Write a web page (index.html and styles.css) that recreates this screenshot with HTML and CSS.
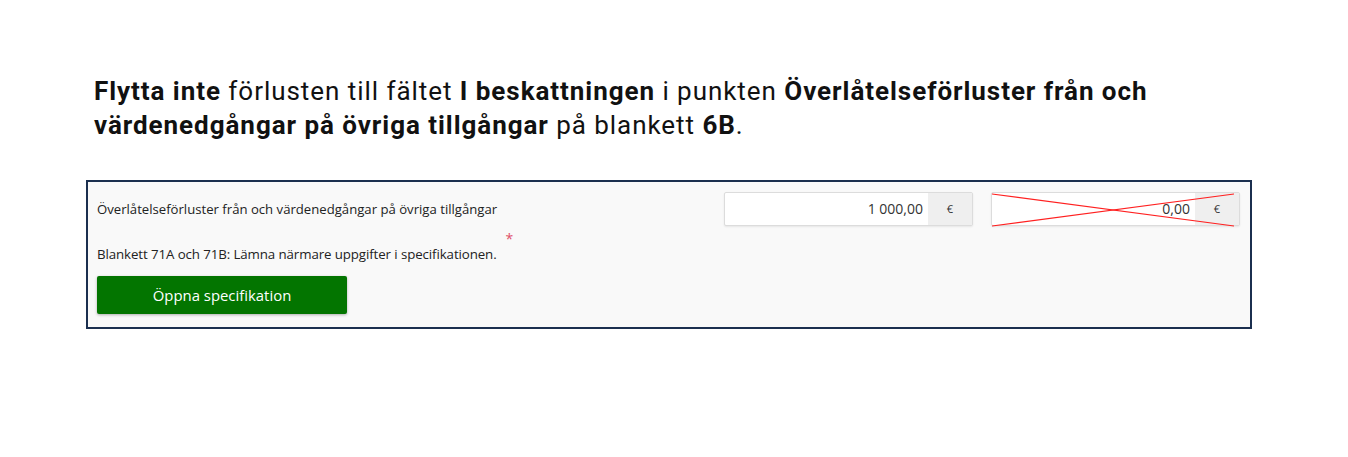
FILE: index.html
```html
<!DOCTYPE html>
<html lang="sv">
<head>
<meta charset="utf-8">
<link rel="stylesheet" href="styles.css">
</head>
<body>
<div class="page">
  <p class="intro"><b>Flytta inte</b> förlusten till fältet <b>I beskattningen</b> i punkten <b>Överlåtelseförluster från och värdenedgångar på övriga tillgångar</b> på blankett <b>6B</b>.</p>
  <div class="panel">
    <div class="row">
      <div class="label">Överlåtelseförluster från och värdenedgångar på övriga tillgångar</div>
      <div class="field">
        <div class="value">1 000,00</div>
        <div class="addon">€</div>
      </div>
      <div class="field crossed">
        <div class="value">0,00</div>
        <div class="addon">€</div>
        <svg class="cross" viewBox="0 0 242 34" preserveAspectRatio="none"><line x1="0" y1="1" x2="242" y2="33" stroke="#ff2020" stroke-width="1.2"/><line x1="0" y1="33" x2="242" y2="1" stroke="#ff2020" stroke-width="1.2"/></svg>
      </div>
    </div>
    <div class="note">Blankett 71A och 71B: Lämna närmare uppgifter i specifikationen.<span class="req">*</span></div>
    <button class="btn">Öppna specifikation</button>
  </div>
</div>
</body>
</html>
```
FILE: styles.css
```css
html, body { margin: 0; padding: 0; background: #fff; }
.page { padding: 74px 0 0 86px; width: 1170px; }
.intro {
  margin: 0 0 0 8px;
  width: 1150px;
  font-family: Roboto, "Liberation Sans", sans-serif;
  font-size: 26px;
  letter-spacing: 0.95px;
  line-height: 34px;
  color: #111;
}
.intro b { font-weight: 700; }
.panel {
  margin-top: 38px;
  width: 1162px;
  height: 145px;
  border: 2px solid #1b2f4f;
  background: #f9f9f9;
  box-sizing: content-box;
  padding: 0;
  font-family: "Open Sans", "Liberation Sans", sans-serif;
  color: #222;
}
.row {
  display: flex;
  align-items: center;
  padding: 10px 10px 0 9px;
  gap: 18px;
}
.label { flex: 1; font-size: 13.15px; line-height: 16px; }
.field {
  position: relative;
  display: flex;
  width: 249px;
  height: 34px;
  box-sizing: border-box;
  border: 1px solid #dcdcdc;
  border-radius: 2px;
  background: #fff;
  box-shadow: 0 1px 2px rgba(0,0,0,0.08);
}
.value {
  flex: 1;
  text-align: right;
  padding-right: 5px;
  font-size: 14px;
  line-height: 32px;
  color: #333;
}
.addon {
  width: 44px;
  background: #efefef;
  text-align: center;
  font-size: 11px;
  line-height: 32px;
  color: #333;
}
.cross { position: absolute; left: 0; top: 0; width: 242px; height: 34px; }
.note {
  margin: 20px 0 0 9px;
  font-size: 13.3px;
  line-height: 16px;
  letter-spacing: -0.1px;
}
.req {
  position: relative;
  top: -15px;
  margin-left: 9px;
  color: #e0506a;
  font-size: 14px;
}
.btn {
  display: block;
  margin: 14px 0 0 9px;
  width: 250px;
  height: 38px;
  border: none;
  border-radius: 2px;
  background: #037500;
  color: #fff;
  font-family: "Open Sans", "Liberation Sans", sans-serif;
  font-size: 14.9px;
  box-shadow: 0 1px 3px rgba(0,0,0,0.3);
}
```
